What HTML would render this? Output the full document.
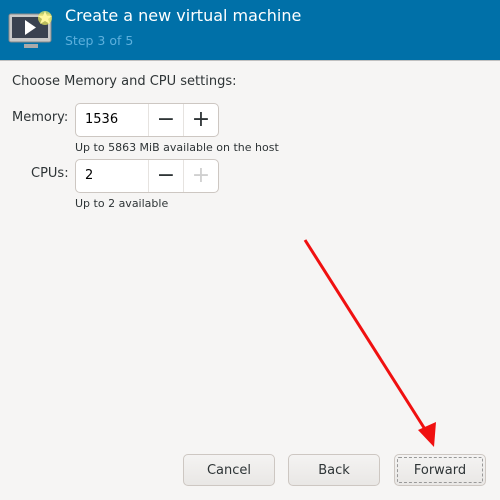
<html><head><style>
body{margin:0;width:500px;height:500px;background:#f6f5f4;font-family:"DejaVu Sans","Liberation Sans",sans-serif;position:relative;overflow:hidden;color:#2e3436}
.hdr{position:absolute;left:0;top:0;width:500px;height:60px;background:#0070a8;border-bottom:1px solid #c0c0c0}
.t{position:absolute;left:65px;top:6px;font-size:16px;color:#fff}
.s{position:absolute;left:65px;top:33px;font-size:12.5px;color:#5db0dd}
.a{position:absolute;font-size:13px}
.sp{position:absolute;left:75px;width:142px;height:32px;border:1px solid #cdc7c2;border-radius:5px;background:#fff}
.sp .v{position:absolute;left:9px;top:8px;font-size:13px;color:#000}
.sp .d{position:absolute;top:0;height:32px;width:1px;background:#e6e3e0}
.sp .b{position:absolute;top:0;width:34px;height:32px;text-align:center;line-height:31px;font-size:22px}
.small{position:absolute;left:75px;font-size:11px}
.btn{position:absolute;top:454px;width:92px;height:32px;border:1px solid #cdc7c2;border-radius:5px;background:linear-gradient(#f4f3f2,#e9e7e5);text-align:center;line-height:32px;font-size:13px;box-sizing:border-box}
</style></head><body>
<div class="hdr">
<svg style="position:absolute;left:8px;top:8px" width="48" height="42" viewBox="0 0 48 42">
<rect x="1" y="6" width="42" height="28" rx="2" fill="#c8c8c8" stroke="#888"/>
<rect x="4" y="9" width="36" height="21" fill="#3a4250"/>
<polygon points="17,12 17,27 28,19.5" fill="#fff"/>
<rect x="16" y="36" width="14" height="4" fill="#aaa"/>
<circle cx="37" cy="10" r="7" fill="#f0f060" opacity=".7"/>
<polygon points="37,3 39,8 44,8 40,11 42,16 37,13 32,16 34,11 30,8 35,8" fill="#fff8a0"/>
</svg>
<div class="t">Create a new virtual machine</div>
<div class="s">Step 3 of 5</div>
</div>
<div class="a" style="left:12px;top:74px">Choose Memory and CPU settings:</div>
<div class="a" style="left:12px;top:110px">Memory:</div>
<div class="sp" style="top:103px"><div class="v">1536</div><div class="d" style="left:72px"></div><div class="d" style="left:107px"></div><div class="b" style="left:73px">−</div><div class="b" style="left:108px">+</div></div>
<div class="small" style="top:141px">Up to 5863 MiB available on the host</div>
<div class="a" style="left:31px;top:166px">CPUs:</div>
<div class="sp" style="top:159px"><div class="v">2</div><div class="d" style="left:72px"></div><div class="d" style="left:107px"></div><div class="b" style="left:73px">−</div><div class="b" style="left:108px;color:#d0d0d0">+</div></div>
<div class="small" style="top:197px">Up to 2 available</div>
<div class="btn" style="left:183px">Cancel</div>
<div class="btn" style="left:288px">Back</div>
<div class="btn" style="left:394px;outline:1px dashed #999;outline-offset:-4px">Forward</div>
<svg style="position:absolute;left:0;top:0" width="500" height="500">
<line x1="305" y1="240" x2="428" y2="434" stroke="#f01010" stroke-width="3"/>
<polygon points="434,447 418,430 436,422" fill="#f01010"/>
</svg>
</body></html>
